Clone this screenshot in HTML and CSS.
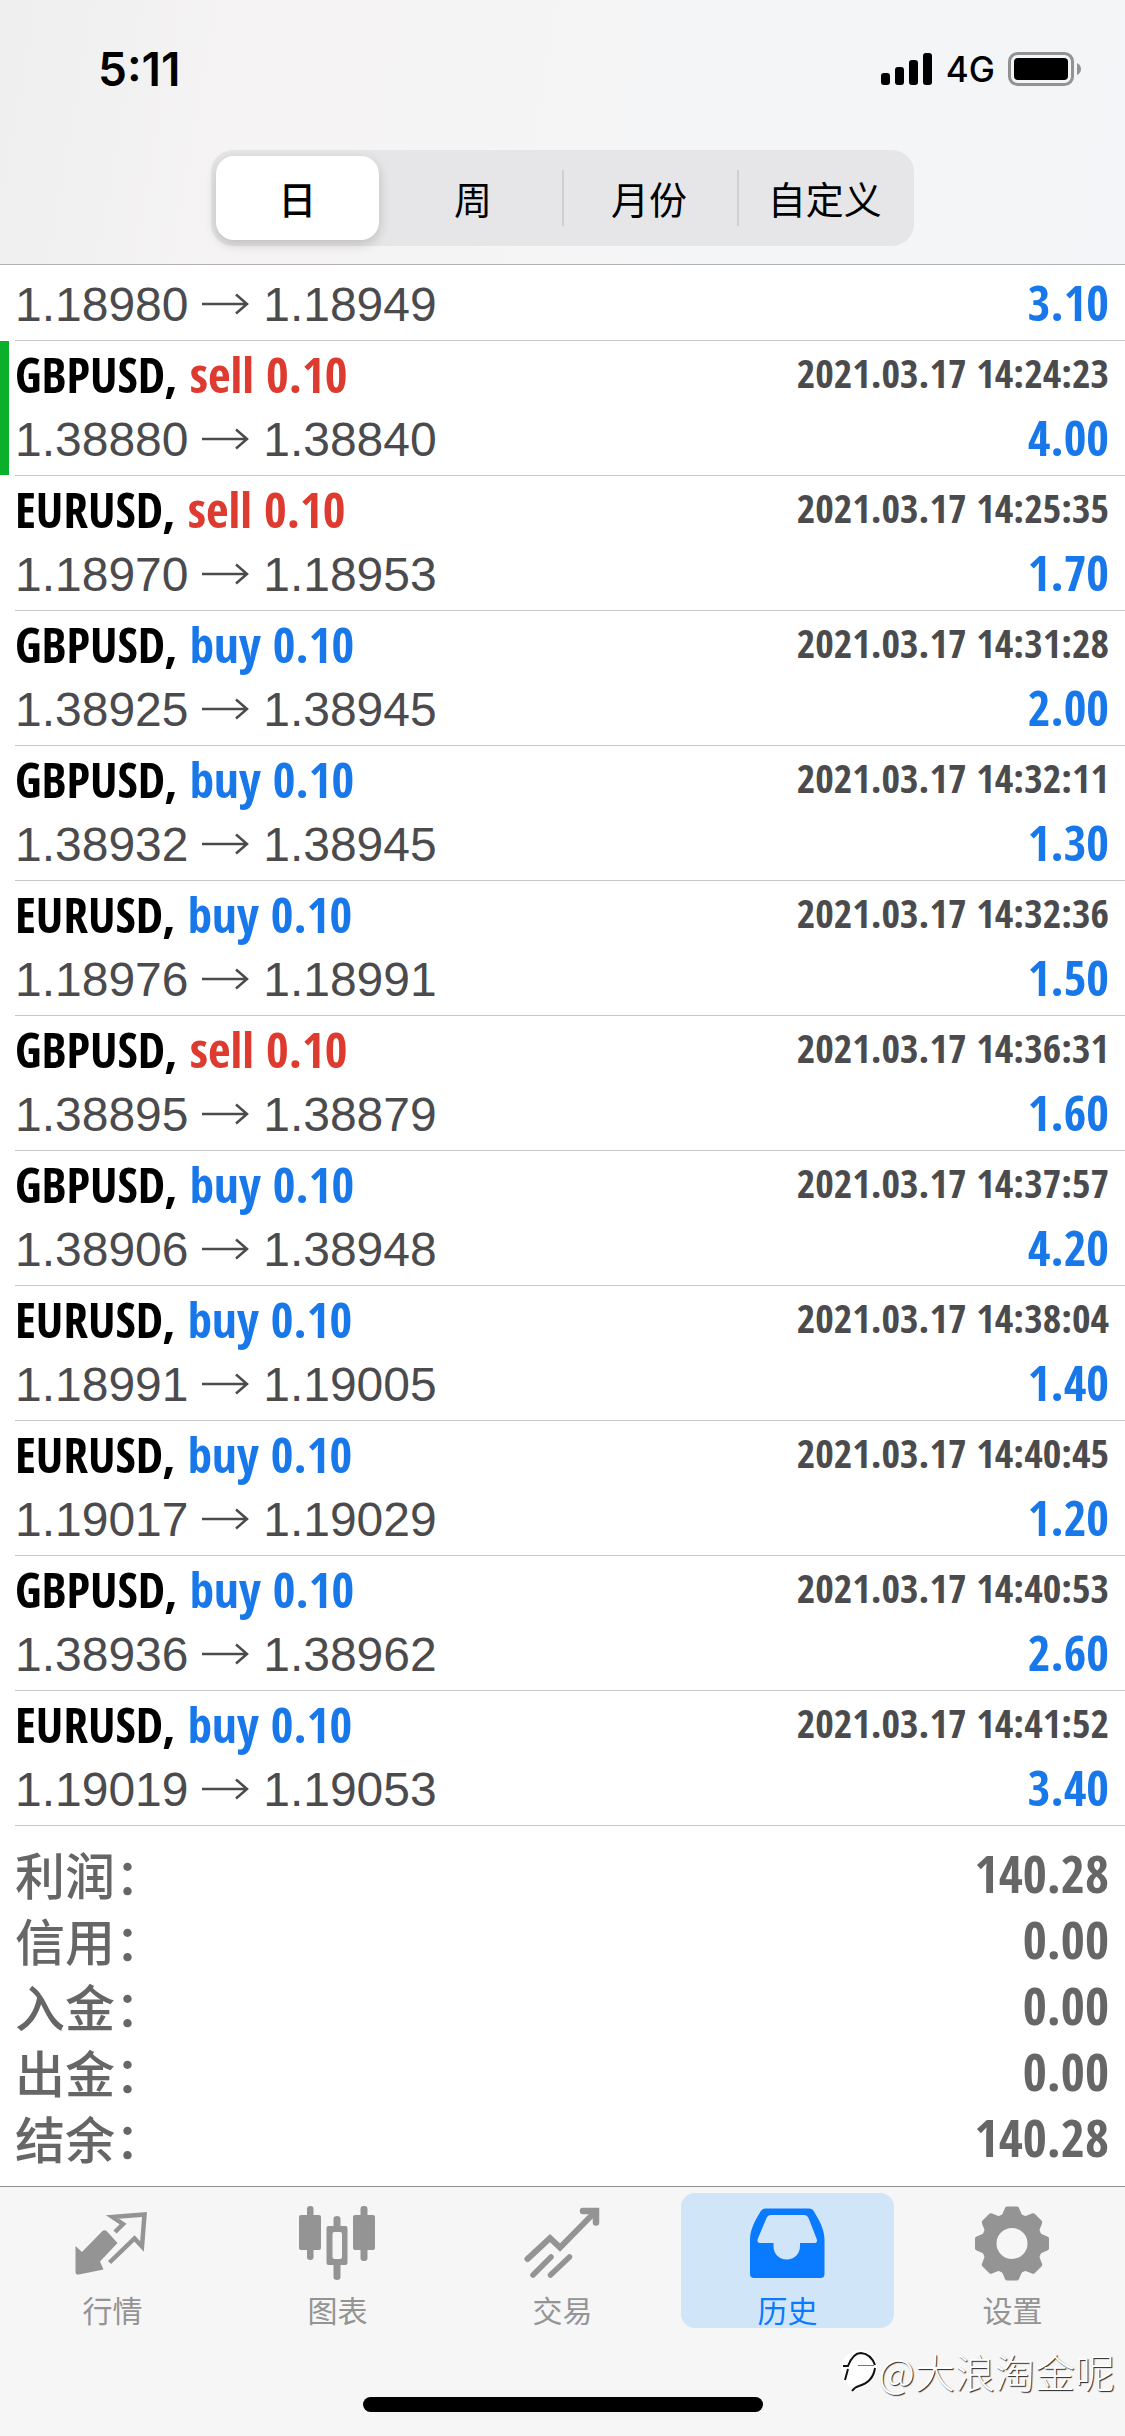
FILE: index.html
```
<!DOCTYPE html>
<html lang="zh-CN">
<head>
<meta charset="utf-8">
<meta name="viewport" content="width=device-width, initial-scale=1">
<title>历史</title>
<link rel="stylesheet" href="styles.css">
</head>
<body>
<svg class="defs" aria-hidden="true"><symbol id="arrow" viewBox="0 0 48 24"><path d="M0 12H45M34 2.500L45 12L34 21.500" fill="none" stroke="currentColor" stroke-width="2.500"/></symbol></svg>
<header class="header">
  <div class="status">
    <time class="clock">5:11</time>
    <div class="status-icons">
      <svg class="signal" viewBox="0 0 52 34" aria-hidden="true"><rect x="0" y="21" width="9" height="12" rx="3"/><rect x="14" y="15" width="9" height="18" rx="3"/><rect x="28" y="8" width="9" height="25" rx="3"/><rect x="42" y="1" width="9" height="32" rx="3"/></svg>
      <span class="network">4G</span>
      <svg class="battery" viewBox="0 0 74 34" aria-hidden="true"><rect x="1.5" y="1.5" width="63" height="31" rx="8" fill="none" stroke="#929294" stroke-width="3"/><rect x="6" y="6" width="54" height="22" rx="4"/><path d="M69 11q4 2 4 6t-4 6z" fill="#929294"/></svg>
    </div>
  </div>
  <nav class="segments">
    <button type="button" class="segment selected">日</button>
    <button type="button" class="segment">周</button>
    <button type="button" class="segment divided">月份</button>
    <button type="button" class="segment divided">自定义</button>
  </nav>
</header>
<main class="content">
  <ul class="deals">
    <li class="deal">
      <div class="line"><span class="prices">1.18980 <svg class="arrow"><use href="#arrow"/></svg> 1.18949</span><span class="profit">3.10</span></div>
    </li>
    <li class="deal marked">
      <div class="line"><span class="symbol">GBPUSD, <span class="sell">sell 0.10</span></span><time class="date">2021.03.17 14:24:23</time></div>
      <div class="line"><span class="prices">1.38880 <svg class="arrow"><use href="#arrow"/></svg> 1.38840</span><span class="profit">4.00</span></div>
    </li>
    <li class="deal">
      <div class="line"><span class="symbol">EURUSD, <span class="sell">sell 0.10</span></span><time class="date">2021.03.17 14:25:35</time></div>
      <div class="line"><span class="prices">1.18970 <svg class="arrow"><use href="#arrow"/></svg> 1.18953</span><span class="profit">1.70</span></div>
    </li>
    <li class="deal">
      <div class="line"><span class="symbol">GBPUSD, <span class="buy">buy 0.10</span></span><time class="date">2021.03.17 14:31:28</time></div>
      <div class="line"><span class="prices">1.38925 <svg class="arrow"><use href="#arrow"/></svg> 1.38945</span><span class="profit">2.00</span></div>
    </li>
    <li class="deal">
      <div class="line"><span class="symbol">GBPUSD, <span class="buy">buy 0.10</span></span><time class="date">2021.03.17 14:32:11</time></div>
      <div class="line"><span class="prices">1.38932 <svg class="arrow"><use href="#arrow"/></svg> 1.38945</span><span class="profit">1.30</span></div>
    </li>
    <li class="deal">
      <div class="line"><span class="symbol">EURUSD, <span class="buy">buy 0.10</span></span><time class="date">2021.03.17 14:32:36</time></div>
      <div class="line"><span class="prices">1.18976 <svg class="arrow"><use href="#arrow"/></svg> 1.18991</span><span class="profit">1.50</span></div>
    </li>
    <li class="deal">
      <div class="line"><span class="symbol">GBPUSD, <span class="sell">sell 0.10</span></span><time class="date">2021.03.17 14:36:31</time></div>
      <div class="line"><span class="prices">1.38895 <svg class="arrow"><use href="#arrow"/></svg> 1.38879</span><span class="profit">1.60</span></div>
    </li>
    <li class="deal">
      <div class="line"><span class="symbol">GBPUSD, <span class="buy">buy 0.10</span></span><time class="date">2021.03.17 14:37:57</time></div>
      <div class="line"><span class="prices">1.38906 <svg class="arrow"><use href="#arrow"/></svg> 1.38948</span><span class="profit">4.20</span></div>
    </li>
    <li class="deal">
      <div class="line"><span class="symbol">EURUSD, <span class="buy">buy 0.10</span></span><time class="date">2021.03.17 14:38:04</time></div>
      <div class="line"><span class="prices">1.18991 <svg class="arrow"><use href="#arrow"/></svg> 1.19005</span><span class="profit">1.40</span></div>
    </li>
    <li class="deal">
      <div class="line"><span class="symbol">EURUSD, <span class="buy">buy 0.10</span></span><time class="date">2021.03.17 14:40:45</time></div>
      <div class="line"><span class="prices">1.19017 <svg class="arrow"><use href="#arrow"/></svg> 1.19029</span><span class="profit">1.20</span></div>
    </li>
    <li class="deal">
      <div class="line"><span class="symbol">GBPUSD, <span class="buy">buy 0.10</span></span><time class="date">2021.03.17 14:40:53</time></div>
      <div class="line"><span class="prices">1.38936 <svg class="arrow"><use href="#arrow"/></svg> 1.38962</span><span class="profit">2.60</span></div>
    </li>
    <li class="deal">
      <div class="line"><span class="symbol">EURUSD, <span class="buy">buy 0.10</span></span><time class="date">2021.03.17 14:41:52</time></div>
      <div class="line"><span class="prices">1.19019 <svg class="arrow"><use href="#arrow"/></svg> 1.19053</span><span class="profit">3.40</span></div>
    </li>
  </ul>
  <dl class="summary">
    <div class="total"><dt>利润：</dt><dd>140.28</dd></div>
    <div class="total"><dt>信用：</dt><dd>0.00</dd></div>
    <div class="total"><dt>入金：</dt><dd>0.00</dd></div>
    <div class="total"><dt>出金：</dt><dd>0.00</dd></div>
    <div class="total"><dt>结余：</dt><dd>140.28</dd></div>
  </dl>
</main>
<footer class="footer">
  <nav class="tabs">
    <button type="button" class="tab">
      <svg class="icon" viewBox="0 0 80 80" aria-hidden="true"><path d="M42 29L50 21L39.500 14L71.500 11.500L69 43.500L61.500 35.500L36.500 59.500" fill="none" stroke="currentColor" stroke-width="4.500"/><path d="M2.500 43L9 49L29 28.500Q31.500 26 34 28.500L44.500 40L27 58.500L30.500 66.500L6 71.500Q2.500 72 2.500 69z" fill="currentColor"/></svg>
      <span>行情</span>
    </button>
    <button type="button" class="tab">
      <svg class="icon" viewBox="0 0 80 80" aria-hidden="true"><g fill="currentColor"><rect x="1" y="12" width="22" height="35" rx="2"/><rect x="9" y="3" width="6.500" height="54" rx="3"/><rect x="55" y="12" width="22" height="35" rx="2"/><rect x="62.500" y="3" width="7" height="55" rx="3"/><path fill-rule="evenodd" d="M30.500 23H35.500V16Q35.500 13 39 13T42.500 16V23H47.500Q49.500 23 49.500 25V60Q49.500 62 47.500 62H42.500V74Q42.500 77 39 77T35.500 74V62H30.500Q28.500 62 28.500 60V25Q28.500 23 30.500 23zM34.500 31V54Q34.500 56 36.500 56H42Q44 56 44 54V31Q44 29 42 29H36.500Q34.500 29 34.500 31z"/></g></svg>
      <span>图表</span>
    </button>
    <button type="button" class="tab">
      <svg class="icon" viewBox="0 0 80 80" aria-hidden="true"><g fill="none" stroke="currentColor" stroke-linecap="round"><path d="M4.500 56L27 35L37 44.500L71 10" stroke-width="6"/><path d="M60 8H73V19.500" stroke-width="6.500"/><path d="M10 72L28 54M27.500 72L46.500 54" stroke-width="5.500"/></g></svg>
      <span>交易</span>
    </button>
    <button type="button" class="tab active">
      <svg class="icon" viewBox="0 0 80 80" aria-hidden="true"><path fill="currentColor" fill-rule="evenodd" d="M18 5.500H61Q64.500 5.500 66 8.500C71 17 76.500 26 76.500 37V71Q76.500 75 72.500 75H6Q2 75 2 71V37C2 26 7.500 17 12.500 8.500Q14.500 5.500 18 5.500zM23 12Q20 12 18.500 15L9.700 36Q8.500 40 12 40H25.500V43C25.500 51 31 56.500 38.700 56.500S52 51 52 43V40H66Q70 40 68.700 36L60.500 15Q59 12 56 12z"/></svg>
      <span>历史</span>
    </button>
    <button type="button" class="tab">
      <svg class="icon" viewBox="0 0 80 80" aria-hidden="true"><g transform="translate(39 40.500)"><circle r="23" fill="none" stroke="currentColor" stroke-width="15"/><g fill="currentColor" stroke="currentColor" stroke-width="4" stroke-linejoin="round"><path id="tooth" d="M-9 -26L-5 -35H5L9 -26z"/><use href="#tooth" transform="rotate(45)"/><use href="#tooth" transform="rotate(90)"/><use href="#tooth" transform="rotate(135)"/><use href="#tooth" transform="rotate(180)"/><use href="#tooth" transform="rotate(225)"/><use href="#tooth" transform="rotate(270)"/><use href="#tooth" transform="rotate(315)"/></g></g></svg>
      <span>设置</span>
    </button>
  </nav>
  <div class="home-bar"></div>
  <div class="watermark">
    <svg class="watermark-logo" viewBox="0 0 40 46" aria-hidden="true"><path d="M7 8Q15 0 26 3T38 20Q36 36 16 42L8 36Q-2 20 7 8z" fill="#fff"/><path d="M4 18H9Q14 5 22 5Q32 6 36 17M36 20Q34 34 20 38Q16 39 13 43M9 21L6 32" fill="none" stroke="#111" stroke-width="2"/><path d="M19 17.500H35" stroke="#777"/></svg>
    <span>@大浪淘金呢</span>
  </div>
</footer>
</body>
</html>
```
FILE: styles.css
```
* {
  box-sizing: border-box;
}

body {
  margin: 0;
  min-height: 100vh;
  display: flex;
  flex-direction: column;
  background: #fff;
  color: #000;
  font-family: "Liberation Sans", "Noto Sans CJK SC", sans-serif;
}

button {
  border: 0;
  padding: 0;
  background: none;
  font: inherit;
  color: inherit;
}

.defs {
  display: none;
}

.header {
  padding-bottom: 18px;
  border-bottom: 1px solid #b2b2b4;
  background: linear-gradient(100deg, #efeff0 0%, #f5f3f3 22%, #f5f5f6 50%, #f4f5f8 100%);
}

.status {
  display: flex;
  align-items: center;
  justify-content: space-between;
  height: 150px;
  padding: 0 43px 12px 98px;
}

.clock {
  font: 600 46px/48px Inter, sans-serif;
}

.status-icons {
  display: flex;
  align-items: center;
  gap: 13px;
}

.signal {
  width: 52px;
  height: 34px;
}

.network {
  font: 500 35px/40px Inter, sans-serif;
}

.battery {
  width: 74px;
  height: 34px;
}

.segments {
  display: grid;
  grid-template-columns: repeat(4, 1fr);
  width: 62.5%;
  height: 96px;
  margin: 0 auto;
  border-radius: 22px;
  background: #e6e6e8;
}

.segment {
  position: relative;
  margin: 6px 8px 6px 5px;
  border-radius: 18px;
  font: 400 38px/48px "Noto Sans CJK SC", sans-serif;
  white-space: nowrap;
}

.segment.selected {
  background: #fff;
  font-weight: 500;
  box-shadow: 0 4px 12px rgba(0, 0, 0, 0.18);
}

.segment.divided::before {
  content: "";
  position: absolute;
  left: -6px;
  top: 14px;
  bottom: 14px;
  width: 2px;
  background: #cfcfd2;
}

.content {
  flex: 1;
}

.deals {
  margin: 0;
  padding: 0;
  list-style: none;
}

.deal {
  position: relative;
  display: flex;
  flex-direction: column;
  margin-left: 15px;
  padding: 2px 16px 6px 0;
  border-bottom: 1px solid #c6c6c8;
}

.deal.marked::before {
  content: "";
  position: absolute;
  left: -15px;
  top: 0;
  bottom: 0;
  width: 9px;
  background: #0bb02a;
}

.line {
  display: flex;
  align-items: baseline;
  justify-content: space-between;
  height: 63px;
  font-size: 48px;
  line-height: 62px;
}

.deal:first-child {
  padding-top: 6px;
}

.symbol,
.date,
.profit,
.total dd {
  font-family: "Open Sans Condensed", "Roboto Condensed", "Open Sans", sans-serif;
  font-weight: 700;
}

.symbol,
.profit {
  font-size: 49px;
}

.sell {
  color: #de3b30;
}

.buy,
.profit {
  color: #1878ea;
}

.date {
  align-self: flex-start;
  font-size: 40px;
  line-height: 60px;
  color: #4b4b4e;
}

.prices {
  color: #4b4b4e;
}

.arrow {
  width: 48px;
  height: 24px;
  vertical-align: 5px;
}

.summary {
  margin: 0;
  padding: 14px 16px 16px 15px;
  color: #666;
}

.total {
  display: flex;
  justify-content: space-between;
  height: 66px;
  line-height: 66px;
}

.total dt {
  font-family: "Noto Sans CJK SC", sans-serif;
  font-size: 50px;
  font-weight: 500;
}

.total dd {
  margin: 0;
  font-size: 52px;
}

.footer {
  position: relative;
  height: 250px;
  padding-top: 6px;
  border-top: 1px solid #8e8e90;
  background: #f6f6f6;
}

.tabs {
  display: grid;
  grid-template-columns: repeat(5, 1fr);
}

.tab {
  display: flex;
  flex-direction: column;
  align-items: center;
  gap: 10px;
  margin: 0 6px;
  padding: 10px 0 3px;
  border-radius: 14px;
  font: 400 30px/32px "Noto Sans CJK SC", sans-serif;
  color: #949494;
}

.tab.active {
  background: #d1e5f9;
  color: #0a7aff;
}

.icon {
  width: 80px;
  height: 80px;
}

.home-bar {
  width: 400px;
  height: 15px;
  margin: 69px auto 0;
  border-radius: 8px;
  background: #000;
}

.watermark {
  position: absolute;
  right: 10px;
  bottom: 41px;
  display: flex;
  align-items: center;
  font: 300 40px/48px "Noto Sans CJK SC", sans-serif;
  color: #fff;
  text-shadow: 1px 1px 1px #222;
}

.watermark-logo {
  width: 40px;
  height: 46px;
}
```
